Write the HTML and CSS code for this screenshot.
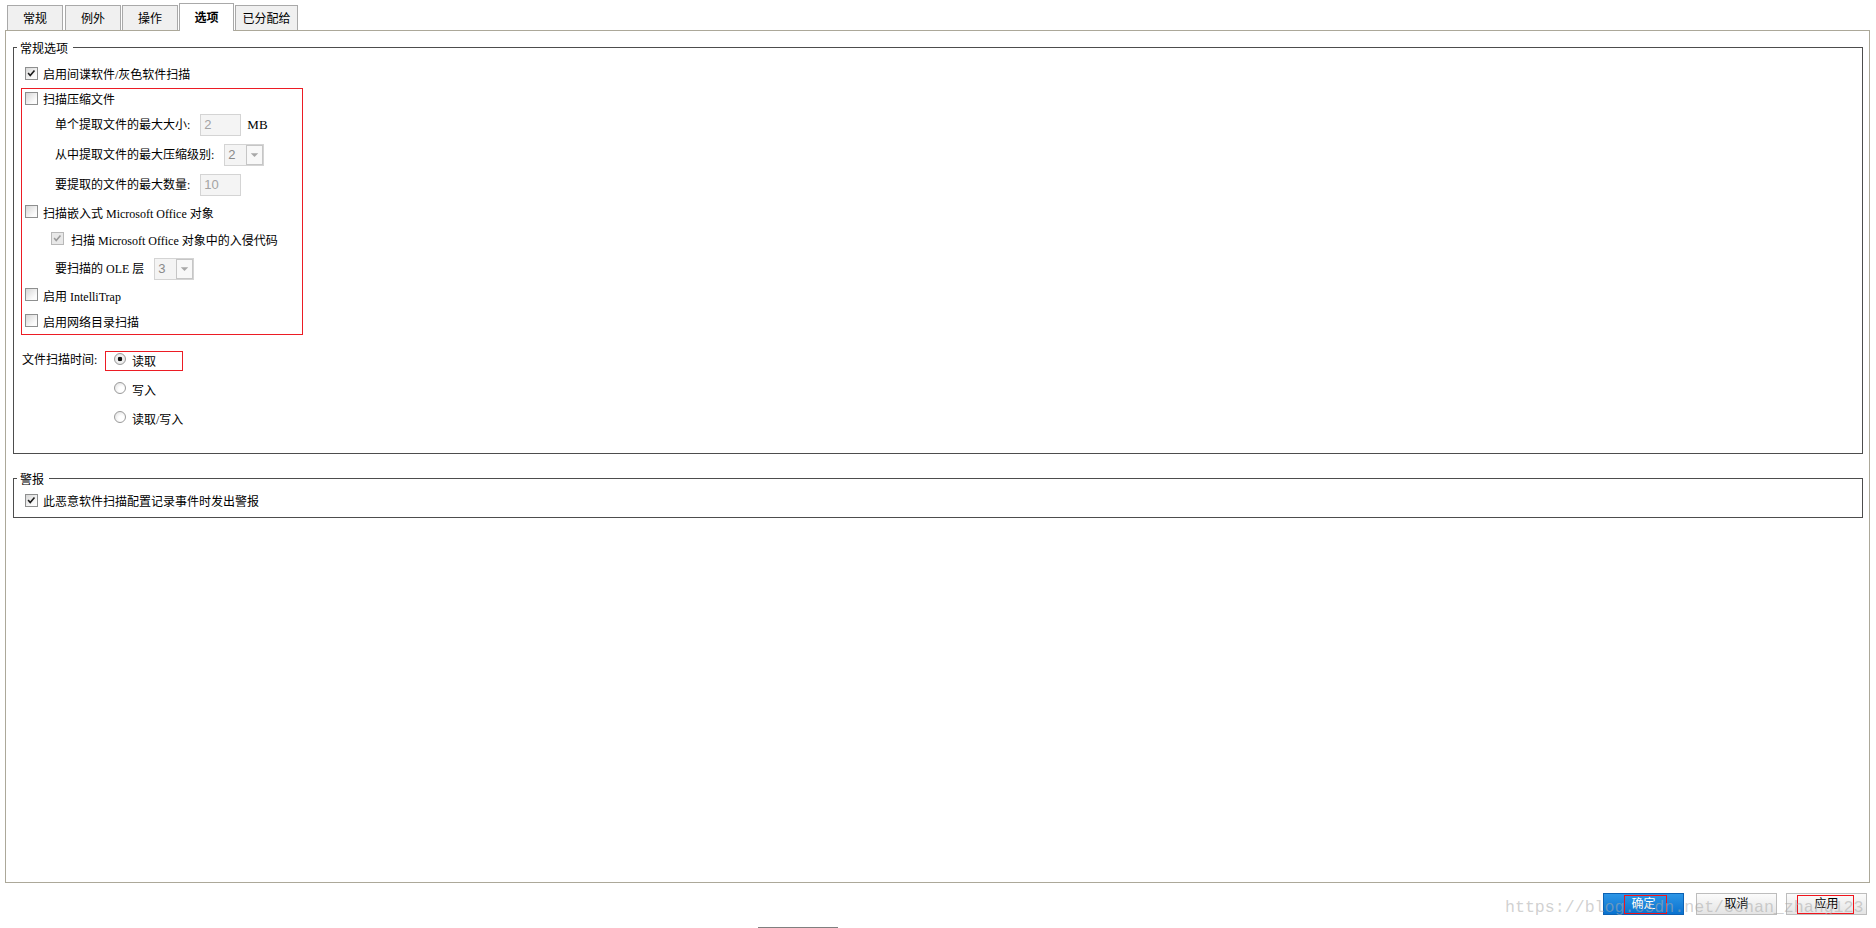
FILE: index.html
```html
<!DOCTYPE html>
<html lang="zh-CN">
<head>
  <meta charset="UTF-8" />
  <title>选项</title>
  <link rel="stylesheet" href="styles.css">
</head>
<body>
  <nav class="tabs">
    <div class="tab t1">常规</div>
    <div class="tab">例外</div>
    <div class="tab">操作</div>
    <div class="tab active">选项</div>
    <div class="tab wide">已分配给</div>
  </nav>

  <section class="panel">
    <div class="group general">
      <span class="group-title">常规选项</span>
      <div class="row top-row"><span class="cb checked"><svg viewBox="0 0 13 13"><polyline points="2.5,6 5,8.8 10,3" /></svg></span>启用间谍软件/灰色软件扫描</div>

      <div class="highlight">
        <div class="row r-first"><span class="cb"></span>扫描压缩文件</div>
        <div class="row r-field indent">
          <span class="field-label">单个提取文件的最大大小:</span>
          <span class="input">2</span>
          <span class="unit">MB</span>
        </div>
        <div class="row r-field indent">
          <span class="field-label">从中提取文件的最大压缩级别:</span>
          <span class="select"><span class="val">2</span><span class="arrow"><svg viewBox="0 0 16 18"><polygon points="4,7 12,7 8,11" /></svg></span></span>
        </div>
        <div class="row r-field indent">
          <span class="field-label">要提取的文件的最大数量:</span>
          <span class="input">10</span>
        </div>
        <div class="row r-cb"><span class="cb"></span>扫描嵌入式 Microsoft Office 对象</div>
        <div class="row r-cb sub"><span class="cb checked disabled"><svg viewBox="0 0 13 13"><polyline points="2.5,6 5,8.8 10,3" /></svg></span>扫描 Microsoft Office 对象中的入侵代码</div>
        <div class="row r-ole indent">
          <span class="field-label">要扫描的 OLE 层</span>
          <span class="select"><span class="val">3</span><span class="arrow"><svg viewBox="0 0 16 18"><polygon points="4,7 12,7 8,11" /></svg></span></span>
        </div>
        <div class="row r-cb2"><span class="cb"></span>启用 IntelliTrap</div>
        <div class="row r-last"><span class="cb"></span>启用网络目录扫描</div>
      </div>

      <div class="scan-time">
        <div class="scan-label">文件扫描时间:</div>
        <div class="radios">
          <div class="radio-row"><span class="opt marked"><span class="radio on"></span>读取</span></div>
          <div class="radio-row"><span class="opt"><span class="radio"></span>写入</span></div>
          <div class="radio-row"><span class="opt"><span class="radio"></span>读取/写入</span></div>
        </div>
      </div>
    </div>

    <div class="group alerts">
      <span class="group-title">警报</span>
      <div class="row top-row"><span class="cb checked"><svg viewBox="0 0 13 13"><polyline points="2.5,6 5,8.8 10,3" /></svg></span>此恶意软件扫描配置记录事件时发出警报</div>
    </div>
  </section>

  <div class="actions">
    <button class="btn primary">确定<span class="mark"></span></button>
    <button class="btn cancel">取消</button>
    <button class="btn apply">应用<span class="mark"></span></button>
  </div>
  <div class="bottom-line"></div>

  <div class="watermark">https://blog.csdn.net/cchan_zhang123</div>
</body>
</html>
```

FILE: styles.css
```css
* { box-sizing: border-box; }
body {
  margin: 0;
  width: 1876px;
  height: 928px;
  overflow: hidden;
  position: relative;
  background: #fff;
  color: #000;
  font: 12px/16px "Liberation Serif", "Noto Sans CJK SC", serif;
}

/* tabs */
.tabs {
  display: flex;
  align-items: flex-end;
  height: 25px;
  margin-top: 5px;
  padding-left: 7px;
}
.tab {
  width: 56px;
  height: 25px;
  margin-right: 1px;
  border: 1px solid #a9a9a9;
  border-bottom: none;
  background: #f0f0f0;
  display: flex;
  align-items: center;
  justify-content: center;
  padding-top: 1px;
}
.tab.t1 { margin-right: 2px; }
.tab.wide { width: 63px; }
.tab.active {
  width: 55px;
  height: 28px;
  margin-bottom: -1px;
  background: #fff;
  font-weight: bold;
  position: relative;
  z-index: 1;
  padding-top: 0;
}

/* main panel */
.panel {
  margin-left: 5px;
  width: 1865px;
  height: 853px;
  border: 1px solid #aca899;
  padding: 16px 6px 0 7px;
}
.group {
  position: relative;
  border: 1px solid #4d4d4d;
}
.group-title {
  position: absolute;
  top: -7px;
  left: 3px;
  padding: 0 5px 0 3px;
  background: #fff;
}
.general { padding: 15px 0 20px 0; }
.alerts { margin-top: 24px; padding: 11px 0 5px 0; }

.row {
  display: flex;
  align-items: center;
  white-space: nowrap;
  padding-top: 2px;
}
.top-row { height: 22px; margin-left: 11px; }

/* checkboxes */
.cb {
  width: 13px;
  height: 13px;
  flex: none;
  margin: 0 5px 4px 0;
  border: 1px solid #8e8f8f;
  background: linear-gradient(135deg, #d6d6d6, #fbfbfb 75%);
  display: flex;
}
.cb svg { width: 11px; height: 11px; }
.cb polyline {
  fill: none;
  stroke: #1c1c1c;
  stroke-width: 1.9;
}
.cb.disabled {
  border-color: #b8b8b8;
  background: #e8e8e8;
}
.cb.disabled polyline { stroke: #9a9a9a; }

/* red annotated block */
.highlight {
  margin: 3px 0 0 7px;
  width: 282px;
  border: 1px solid #ec1c24;
  padding-left: 3px;
}
.r-first { height: 20px; }
.r-field { height: 30px; }
.r-cb { height: 27px; }
.r-ole { height: 29px; }
.r-cb2 { height: 27px; }
.r-last { height: 25px; }
.indent { padding-left: 30px; }
.sub { padding-left: 26px; }
.sub .cb { margin-right: 7px; }

.field-label { margin-right: 10px; }
.input {
  width: 41px;
  height: 22px;
  border: 1px solid #d4d4d4;
  background: #f4f4f4;
  color: #a3a3a3;
  font: 13px/20px "Liberation Sans", sans-serif;
  padding-left: 3px;
}
.unit { margin-left: 6px; font-size: 13px; }
.select {
  width: 40px;
  height: 22px;
  display: flex;
  border: 1px solid #d4d4d4;
  background: #f4f4f4;
  color: #8a8a8a;
  font: 13px/20px "Liberation Sans", sans-serif;
}
.select .val { flex: 1; padding-left: 3px; }
.select .arrow {
  width: 17px;
  border: 1px solid #c6c6c6;
  background: #f8f8f8;
  display: flex;
}
.arrow svg { width: 15px; height: 18px; }
.arrow polygon { fill: #a8a8a8; }

/* scan time radios */
.scan-time {
  display: flex;
  margin-top: 11px;
}
.scan-label {
  width: 83px;
  margin-left: 8px;
  height: 27px;
  display: flex;
  align-items: center;
}
.radio-row {
  height: 29px;
  display: flex;
  align-items: center;
}
.opt {
  display: flex;
  align-items: center;
  min-width: 78px;
  height: 20px;
  white-space: nowrap;
  border: 1px solid transparent;
  padding: 2px 0 0 8px;
}
.opt.marked { width: 78px; border-color: #ec1c24; }
.radio {
  width: 12px;
  height: 12px;
  flex: none;
  margin: 0 6px 5px 0;
  border-radius: 50%;
  border: 1px solid #9a9a9a;
  background: radial-gradient(circle at 65% 65%, #fff 30%, #dcdcdc);
}
.radio.on {
  background: radial-gradient(circle, #111 0 2px, #f4f4f4 2.6px, #dcdcdc 100%);
}

/* dialog buttons */
.actions {
  display: flex;
  justify-content: flex-end;
  margin-top: 10px;
  padding-right: 9px;
}
.btn {
  position: relative;
  width: 81px;
  height: 22px;
  padding: 0;
  font: 12px/20px "Liberation Serif", "Noto Sans CJK SC", serif;
  border: 1px solid #bdbdbd;
  background: linear-gradient(#fbfbfb, #e4e4e4);
  color: #000;
}
.btn.primary {
  border-color: #0c62b4;
  background: linear-gradient(#2d96e6, #0a72cf);
  color: #fff;
  margin-right: 12px;
}
.btn.cancel { margin-right: 9px; }
.mark {
  position: absolute;
  top: 1px;
  height: 19px;
  border: 1px solid #f0141c;
}
.primary .mark { left: 20px; width: 43px; }
.apply .mark { left: 10px; width: 57px; }

.bottom-line {
  margin: 12px 0 0 758px;
  width: 80px;
  height: 1px;
  background: #808080;
}

.watermark {
  position: absolute;
  left: 1505px;
  top: 898px;
  font: 16.6px/20px "Liberation Mono", monospace;
  color: rgba(170, 170, 170, 0.55);
  white-space: nowrap;
  pointer-events: none;
}
```
